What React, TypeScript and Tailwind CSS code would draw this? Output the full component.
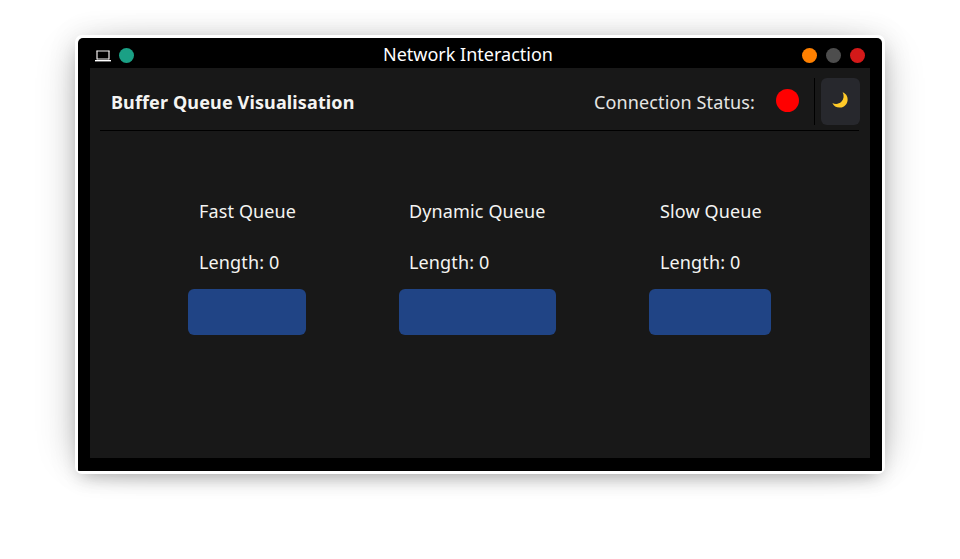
const queues = [
  { name: 'Fast Queue', length: 0, box: 'w-[118px]', inset: 'pl-[11px]' },
  { name: 'Dynamic Queue', length: 0, box: 'w-[157px]', inset: 'pl-[10px]' },
  { name: 'Slow Queue', length: 0, box: 'w-[122px]', inset: 'pl-[11px]' },
];

function Laptop() {
  return (
    <svg width="16" height="12" viewBox="0 0 16 12" fill="none">
      <path d="M2 0.8V9.5M14 0.8V9.5" stroke="#c4c0c0" strokeWidth="1.5" />
      <path d="M1.5 1H14.5M2 9H14" stroke="#f2eff0" strokeWidth="1.2" />
      <rect x="0" y="10" width="16" height="1.4" fill="#ffffff" />
    </svg>
  );
}

function Moon() {
  return (
    <svg width="16" height="16" viewBox="0 0 17 17">
      <path d="M11.3 0.3C14.6 1.6 16.9 4.4 16.6 8.4C16.3 13 13 16.3 8.6 16.5C4.8 16.7 1.8 14.8 0.4 11.6C3.4 13.2 7.3 13 9.9 10.4C12.6 7.7 13.1 3.6 11.3 0.3Z" fill="#ffca28" />
    </svg>
  );
}

export default function App() {
  return (
    <div className="h-[559px] w-[960px] overflow-hidden bg-white pl-[75px] pt-[35px] font-['Noto_Sans',sans-serif] text-[18px] leading-6 text-[#f4f4f2]">
      <div className="h-[439px] w-[810px] rounded-[7px] border-[3px] border-white bg-white shadow-[0_0_30px_rgba(0,0,0,0.09),-18px_0_38px_-18px_rgba(0,0,0,0.2),18px_0_38px_-18px_rgba(0,0,0,0.2),0_8px_18px_-6px_rgba(0,0,0,0.24)]">
        <div className="h-[433px] rounded-t-[5px] rounded-b-[1px] bg-black px-3">
          <header className="flex h-[30px] items-center px-[5px]">
            <div className="flex items-center gap-2 pt-[5px]">
              <Laptop />
              <span className="size-[15px] rounded-full bg-[#1aa085]" />
            </div>
            <h1 className="ml-[249px] pt-px text-white">Network Interaction</h1>
            <div className="ml-auto flex items-center gap-[9px] pt-[5px]">
              <span className="size-[15px] rounded-full bg-[#ff8000]" />
              <span className="size-[15px] rounded-full bg-[#4d4d4d]" />
              <span className="size-[15px] rounded-full bg-[#d41919]" />
            </div>
          </header>
          <main className="h-[390px] bg-[#181818] px-[10px] pt-[10px] tracking-[0.13px]">
            <div className="flex h-[47px] pl-[11px]">
              <h2 className="mt-3 font-bold">Buffer Queue Visualisation</h2>
              <span className="ml-auto mt-3 text-[#e6e6e4]">Connection Status:</span>
              <span className="ml-[21px] mr-[15px] mt-[11px] size-[23px] rounded-full bg-[#ff0000]" />
              <div className="w-px bg-black" />
              <button className="ml-[6px] flex w-[39px] justify-center rounded-[6px] bg-[#27282d] pr-px pt-[14px]">
                <Moon />
              </button>
            </div>
            <div className="mr-px mt-[5px] h-px bg-black" />
            <div className="mt-[68px] flex gap-[93px] pl-[88px]">
              {queues.map((q) => (
                <section key={q.name}>
                  <p className={q.inset}>{q.name}</p>
                  <p className={`mt-[27px] ${q.inset}`}>Length: {q.length}</p>
                  <div className={`mt-[15px] h-[46px] rounded-[6px] bg-[#204485] ${q.box}`} />
                </section>
              ))}
            </div>
          </main>
        </div>
      </div>
    </div>
  );
}
